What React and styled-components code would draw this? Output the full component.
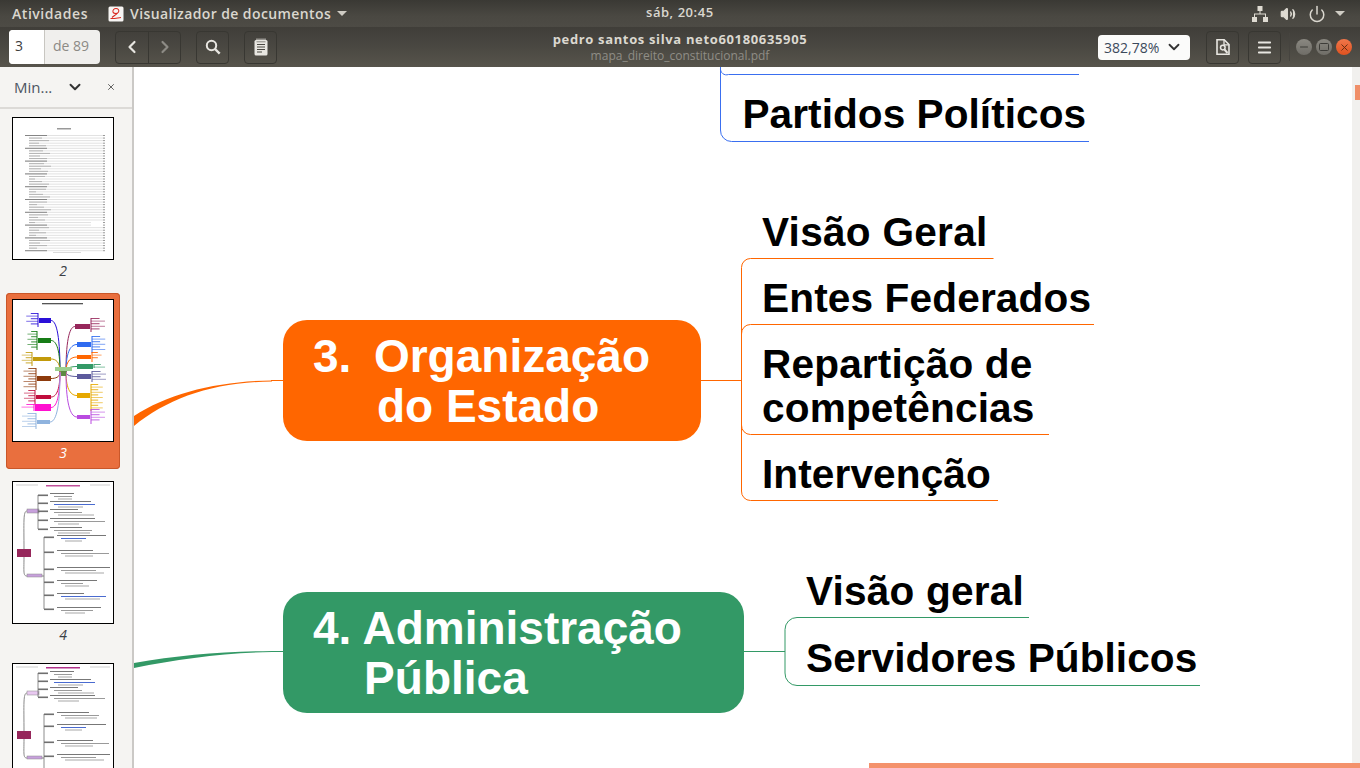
import React from 'react'
import styled, { createGlobalStyle } from 'styled-components'
import { ChevronLeft, ChevronRight, ChevronDown, Menu, X, Minus, Volume2, Power } from 'lucide-react'

const Global = createGlobalStyle`
  html, body { margin: 0; padding: 0; height: 100%; overflow: hidden; background: #fff; }
  * { box-sizing: border-box; }
`

const Screen = styled.div`
  width: 1360px;
  height: 768px;
  display: flex;
  flex-direction: column;
  overflow: hidden;
  font-family: "Open Sans", "Noto Sans", sans-serif;
  position: relative;
`

const TopBar = styled.div`
  height: 27px;
  flex: none;
  display: flex;
  align-items: center;
  padding: 0 12px;
  color: #dad7cf;
  font-size: 14px;
  font-weight: 600;
  letter-spacing: 0.55px;
  background: linear-gradient(#3a3934, #4a4842 60%, #4d4b45);
`

const AppName = styled.div`
  display: flex;
  align-items: center;
  gap: 6px;
  margin-left: 20px;
  letter-spacing: 0.4px;
`

const Clock = styled.div`
  position: absolute;
  left: 646px;
  top: 3px;
  font-weight: 600;
  font-size: 13px;
  letter-spacing: 0.55px;
`

const Tray = styled.div`
  margin-left: auto;
  display: flex;
  align-items: center;
  gap: 12px;
  padding-right: 3px;
`

const Caret = styled.span`
  width: 0;
  height: 0;
  margin-left: ${p => p.$ml || 0}px;
  border-left: 5px solid transparent;
  border-right: 5px solid transparent;
  border-top: 5px solid #cfccc4;
`

const ToolBar = styled.div`
  height: 40px;
  flex: none;
  display: flex;
  align-items: center;
  padding: 0 8px 0 9px;
  background: linear-gradient(#403e39, #4a4842 50%, #57544c);
`

const PageBox = styled.div`
  width: 91px;
  height: 34px;
  display: flex;
  border-radius: 4px;
  background: #f0efed;
  font-size: 14px;
  overflow: hidden;
`

const PageInput = styled.div`
  width: 36px;
  background: #fff;
  color: #3d3d3d;
  padding: 6px 0 0 6px;
  border-right: 1px solid #c8c6c1;
`

const PageTotal = styled.div`
  flex: 1;
  color: #8c8a85;
  padding: 6px 0 0 8px;
`

const ToolButton = styled.div`
  width: 33px;
  height: 33px;
  display: flex;
  align-items: center;
  justify-content: center;
  border: 1px solid #383732;
  border-radius: 4px;
  margin-left: ${p => p.$gap || 0}px;
  color: ${p => (p.$off ? '#8d8b85' : '#e8e6e1')};
`

const NavGroup = styled.div`
  display: flex;
  margin-left: 15px;
  border: 1px solid #383732;
  border-radius: 4px;
  & > div { border: 0; border-radius: 0; width: 32px; height: 31px; }
  & > div + div { border-left: 1px solid #383732; }
`

const DocTitle = styled.div`
  position: absolute;
  left: 440px;
  width: 480px;
  top: 31px;
  text-align: center;
  line-height: 17px;
  color: #dbd8d0;
  font-size: 13px;
  font-weight: 700;
  letter-spacing: 0.65px;
`

const DocFile = styled.div`
  color: #8f8d86;
  font-size: 12px;
  font-weight: 400;
  line-height: 13px;
  letter-spacing: 0;
  margin-top: 1px;
`

const ZoomBox = styled.div`
  margin-left: auto;
  width: 92px;
  height: 25px;
  display: flex;
  align-items: center;
  justify-content: space-between;
  padding: 0 7px 0 6px;
  border-radius: 4px;
  background: #fbfbfa;
  color: #3c4a5c;
  font-size: 14px;
`

const Divider = styled.div`
  width: 1px;
  height: 28px;
  background: #46443f;
  margin: 0 6px 0 8px;
`

const WinButton = styled.div`
  width: 16px;
  height: 16px;
  border-radius: 50%;
  display: flex;
  align-items: center;
  justify-content: center;
  margin-left: ${p => (p.$first ? 0 : 4)}px;
  color: ${p => (p.$close ? '#5e2a10' : '#3d3c38')};
  background: ${p => (p.$close ? 'linear-gradient(#f0764a, #e0521f)' : 'linear-gradient(#8a8881, #6f6d67)')};
`

const Body = styled.div`
  flex: 1;
  display: flex;
  min-height: 0;
`

const Sidebar = styled.aside`
  width: 134px;
  flex: none;
  display: flex;
  flex-direction: column;
  background: #f5f4f2;
  border-right: 2px solid #cbc9c6;
  overflow: hidden;
`

const SideHead = styled.div`
  height: 42px;
  flex: none;
  display: flex;
  align-items: center;
  padding: 0 16px 0 14px;
  color: #4d5563;
  font-size: 15px;
  border-bottom: 2px solid #dcdad7;
  span { flex: 1; }
`

const Thumbs = styled.div`
  display: flex;
  flex-direction: column;
  padding: 2px 0 0 6px;
`

const Thumb = styled.div`
  width: 114px;
  height: 176px;
  flex: none;
  padding: 6px 0 0 6px;
  border-radius: 4px;
  margin-bottom: 6px;
  background: ${p => (p.$active ? '#e96f3e' : 'transparent')};
  box-shadow: ${p => (p.$active ? 'inset 0 0 0 1px #c9572a' : 'none')};
`

const Sheet = styled.svg`
  display: block;
  width: 102px;
  height: 143px;
  background: #fff;
  border: 1px solid #000;
`

const PageNo = styled.div`
  width: 102px;
  margin-top: 1px;
  text-align: center;
  font-size: 14px;
  font-style: italic;
  line-height: 19px;
  color: ${p => (p.$active ? '#fff' : '#3b3f46')};
`

const Canvas = styled.main`
  flex: 1;
  position: relative;
  background: #fff;
  overflow: hidden;
  font-family: "Liberation Sans", Arial, sans-serif;
`

const Wires = styled.svg`
  position: absolute;
  left: 0;
  top: 0;
`

const Topic = styled.div`
  position: absolute;
  left: 149px;
  top: ${p => p.$top}px;
  width: ${p => p.$w}px;
  height: 121px;
  padding: 11px 0 0 30px;
  border-radius: 24px;
  background: ${p => p.$bg};
  color: #fff;
  font-size: 46px;
  font-weight: 700;
  line-height: 50px;
  white-space: pre;
`

const TopicLine = styled.div`
  word-spacing: ${p => p.$ws || 0}px;
`

const Leaf = styled.div`
  position: absolute;
  left: ${p => p.$x}px;
  top: ${p => p.$y}px;
  color: #000;
  font-size: 40.6px;
  font-weight: 700;
  line-height: 44px;
  white-space: pre;
  letter-spacing: ${p => p.$ls || 0}px;
`

const ScrollTrack = styled.div`
  width: 8px;
  flex: none;
  position: relative;
  background: #f1f0ee;
`

const ScrollThumb = styled.div`
  position: absolute;
  right: 0;
  top: 18px;
  width: 5px;
  height: 15px;
  background: #f08f69;
`

const Selection = styled.div`
  position: absolute;
  left: 869px;
  right: 0;
  bottom: 0;
  height: 5px;
  background: #f4926c;
`

// ---- little drawings ----

const EvinceIcon = () => (
  <svg width="16" height="16" viewBox="0 0 16 16">
    <rect x="0.5" y="0.5" width="15" height="15" rx="1.5" fill="#f7f5f3" />
    <path d="M2.500 12.500c3 .4 7-.6 10.500-1M4 11.500c1.500-1.500 5-3 6.500-5.500 1-2-.5-3.500-2.500-3.500S4.500 4 5 6c.5 1.500 3 1.800 5 1" fill="none" stroke="#d8281f" strokeWidth="1.1" />
  </svg>
)

const NetworkIcon = () => (
  <svg width="16" height="16" viewBox="0 0 16 16" fill="#dfdbd2">
    <rect x="5.500" y="0" width="5" height="5" />
    <rect x="0" y="11" width="5" height="5" />
    <rect x="11" y="11" width="5" height="5" />
    <path d="M7.500 5h1v2.500h5.500V11h-1V8.500H3V11H2V7.500h5.500z" />
  </svg>
)

const NotesIcon = () => (
  <svg width="14" height="18" viewBox="0 0 14 18">
    <rect x="0.500" y="2" width="13" height="15.500" rx="1.500" fill="#e8e6e1" />
    <path d="M3 0.500v3M5 0.500v3M7 0.500v3M9 0.500v3M11 0.500v3" stroke="#e8e6e1" strokeWidth="1" />
    <path d="M2.500 3.800h9" stroke="#4a4842" strokeWidth="0.600" />
    <path d="M3 6.500h8M3 9h8M3 11.500h8M3 14h5" stroke="#4a4842" strokeWidth="1.100" />
  </svg>
)

const SearchIcon = () => (
  <svg width="16" height="16" viewBox="0 0 16 16" fill="none" stroke="#e8e6e1">
    <circle cx="6.500" cy="6.500" r="4.700" strokeWidth="2" />
    <path d="M10 10l4.700 4.700" strokeWidth="2.400" />
  </svg>
)

const DocSearchIcon = () => (
  <svg width="14" height="16" viewBox="0 0 14 16" fill="none">
    <path d="M1 .8h7.200L13 5.500v9.700H1z" stroke="#e8e6e1" strokeWidth="1.600" fill="#55524b" />
    <path d="M8 1v4.800h5" stroke="#e8e6e1" strokeWidth="1.300" />
    <circle cx="6.800" cy="8.600" r="2.300" stroke="#e8e6e1" strokeWidth="1.500" />
    <path d="M8.500 10.500l3 3.500" stroke="#e8e6e1" strokeWidth="2" />
  </svg>
)

// thumbnails are tiny drawings of the pdf pages, not readable text
const TocPage = () => (
  <Sheet viewBox="0 0 100 141">
    <rect x="44" y="10" width="14" height="1.500" fill="#999" />
    {Array.from({ length: 46 }, (_, i) => {
      const y = 17 + i * 2.560
      const head = i % 5 === 0
      const x = head ? 12 : 16
      const end = i === 34 || i === 35 ? 78 : 90
      return (
        <g key={i}>
          <rect x={x} y={y} width={end - x} height="1" fill="#e2e2e2" />
          <rect x={x} y={y} width={head ? 22 : 6 + ((i * 7) % 17)} height="1" fill={head ? '#858585' : '#b4b4b4'} />
          <rect x="90" y={y} width="2" height="1" fill="#999" />
        </g>
      )
    })}
    <rect x="40" y="134" width="28" height="1" fill="#dadada" />
  </Sheet>
)

// colour, node x, y, w, h, leaf x, leaf width, leaf top, leaf bottom
const mapBranches = [
  ['#2a10d8', 26, 18, 12, 5, 8, 16, 13, 27],
  ['#177c17', 25, 38, 13, 5, 11, 13, 31, 50],
  ['#c29a0a', 20, 57, 18, 4, 5, 14, 52, 66],
  ['#8d3a0c', 24, 76, 14, 5, 6, 17, 68, 90],
  ['#c00d3d', 23, 95, 15, 4, 7, 15, 90, 105],
  ['#ff10d0', 22, 104, 16, 7, 4, 17, 104, 111],
  ['#8fb3de', 24, 120, 13, 4, 4, 19, 113, 129],
  ['#96275b', 62, 24, 15, 5, 78, 19, 18, 32],
  ['#2f6bf0', 64, 42, 14, 5, 79, 18, 36, 53],
  ['#ff6600', 64, 55, 14, 4, 79, 13, 52, 62],
  ['#339966', 64, 64, 16, 5, 80, 15, 64, 68],
  ['#5c5a9c', 64, 74, 14, 5, 78, 19, 71, 82],
  ['#e6a800', 64, 93, 13, 5, 78, 16, 84, 111],
  ['#b94be0', 64, 115, 13, 4, 78, 19, 109, 124],
]

const MapPage = () => (
  <Sheet viewBox="0 0 100 141">
    <rect x="29" y="3" width="41" height="1.300" fill="#555" />
    {mapBranches.map(([c, x, y, w, h, lx, lw, top, bottom]) => {
      const left = x < 45
      const ex = left ? x + w : x
      const ey = y + h / 2
      const sx = left ? 47 : 53
      const spine = left ? x : x + w
      return (
        <g key={c}>
          <path d={`M${sx} 72C${sx} ${ey + (72 - ey) * 0.2} ${(sx + ex) / 2} ${ey} ${ex} ${ey}`} fill="none" stroke={c} strokeWidth="1" />
          <rect x={x} y={y} width={w} height={h} fill={c} />
          <rect x={left ? spine - 1.500 : spine + 0.500} y={top} width="1" height={bottom - top} fill={c} />
          {Array.from({ length: Math.max(2, Math.floor((bottom - top) / 2.600)) }, (_, i) => {
            const width = lw * (0.450 + ((i * 3) % 6) / 10.500)
            return (
              <rect
                key={i}
                x={left ? spine - 1 - width : spine + 1}
                y={top + i * 2.600}
                width={width}
                height="1"
                fill={c}
                opacity={i % 2 ? 0.6 : 0.85}
              />
            )
          })}
        </g>
      )
    })}
    <rect x="42" y="67" width="17" height="4" fill="#9ccf8f" />
    <rect x="48" y="71" width="5" height="5" fill="#5d8b43" />
  </Sheet>
)

const OutlinePage = ({ title, upper, lower, upperFill }) => {
  const rows = [...upper.map(y => [y, 35, true]), ...lower.map(y => [y, 42, false])]
  return (
    <Sheet viewBox="0 0 100 141">
      <rect x="3" y="2.500" width="22" height="1" fill="#d0d0d0" />
      <rect x="77" y="2.500" width="20" height="1" fill="#d0d0d0" />
      <rect x="33" y="3" width="34" height="1.500" fill={title} />
      <path d="M11 68C11 40 10 29 14 29M11 75C11 90 10 94 14 94" fill="none" stroke="#8a8a8a" strokeWidth="1" />
      <rect x="4" y="67" width="14" height="8" fill="#96275b" />
      <rect x="14" y="27" width="12" height="4" fill={upperFill} stroke="#8a8a8a" strokeWidth="0.500" />
      <rect x="14" y="92" width="15" height="3" fill="#c7a0dc" stroke="#8a8a8a" strokeWidth="0.500" />
      <path
        d={`M26 29H25V${upper[0]}M25 29V${upper[upper.length - 1]}M29 94H31V${lower[0]}M31 94V${lower[lower.length - 1]}`}
        fill="none"
        stroke="#6f6f6f"
        strokeWidth="0.800"
      />
      {rows.map(([y, x, top], i) => (
        <g key={i}>
          <rect x={top ? 25 : 31} y={y - 0.500} width="10" height="1.600" fill="#6f6f6f" />
          <rect x={x + 2} y={y - 2} width={24 + ((i * 17) % 30)} height="1" fill="#777" />
          <rect x={x + 6} y={y + 1} width={18 + ((i * 23) % 36)} height="1" fill={i % 4 === 1 ? '#4a6bd0' : '#9a9a9a'} />
          <rect x={x + 10} y={y + 3.500} width={14 + ((i * 11) % 26)} height="1" fill="#a8a8a8" />
        </g>
      ))}
    </Sheet>
  )
}

export default function App() {
  return (
    <Screen>
      <Global />
      <TopBar>
        Atividades
        <AppName>
          <EvinceIcon />
          Visualizador de documentos
          <Caret />
        </AppName>
        <Clock>sáb, 20:45</Clock>
        <Tray>
          <NetworkIcon />
          <Volume2 size={16} fill="#dfdbd2" />
          <Power size={18} strokeWidth={2} />
          <Caret $ml={-3} />
        </Tray>
      </TopBar>

      <ToolBar>
        <PageBox>
          <PageInput>3</PageInput>
          <PageTotal>de 89</PageTotal>
        </PageBox>
        <NavGroup>
          <ToolButton><ChevronLeft size={20} strokeWidth={2.6} /></ToolButton>
          <ToolButton $off><ChevronRight size={20} strokeWidth={2.6} /></ToolButton>
        </NavGroup>
        <ToolButton $gap={15}><SearchIcon /></ToolButton>
        <ToolButton $gap={15}><NotesIcon /></ToolButton>
        <DocTitle>
          pedro santos silva neto60180635905
          <DocFile>mapa_direito_constitucional.pdf</DocFile>
        </DocTitle>
        <ZoomBox>
          382,78%
          <ChevronDown size={18} strokeWidth={2.4} color="#333" />
        </ZoomBox>
        <ToolButton $gap={16}><DocSearchIcon /></ToolButton>
        <ToolButton $gap={9}><Menu size={17} strokeWidth={2.6} /></ToolButton>
        <Divider />
        <WinButton $first><Minus size={12} /></WinButton>
        <WinButton>
          <svg width="10" height="8"><rect x="0.500" y="0.500" width="9" height="7" rx="1" fill="none" stroke="#3d3c38" /></svg>
        </WinButton>
        <WinButton $close><X size={11} strokeWidth={2} /></WinButton>
      </ToolBar>

      <Body>
        <Sidebar>
          <SideHead>
            <span>Min...</span>
            <ChevronDown size={18} strokeWidth={2.6} color="#333" style={{ marginRight: 22 }} />
            <X size={10} strokeWidth={2} color="#444" />
          </SideHead>
          <Thumbs>
            <Thumb><TocPage /><PageNo>2</PageNo></Thumb>
            <Thumb $active><MapPage /><PageNo $active>3</PageNo></Thumb>
            <Thumb>
              <OutlinePage title="#c0509a" upperFill="#c7a0dc" upper={[13, 21, 29, 38, 47]} lower={[55, 70, 87, 100, 113, 127]} />
              <PageNo>4</PageNo>
            </Thumb>
            <Thumb>
              <OutlinePage title="#b0308a" upperFill="#e8c8f0" upper={[9, 17, 25, 33]} lower={[50, 62, 78, 92, 106]} />
            </Thumb>
          </Thumbs>
        </Sidebar>

        <Canvas>
          <Wires width="1218" height="701" viewBox="0 0 1218 701" fill="none">
            {/* canvas starts at x=134, y=67 */}
            <g stroke="#3a6ff0" strokeWidth="1">
              <path d="M586.500 0V1a6 6 0 0 0 8 6.500H945" />
              <path d="M586.500 0V63a11 11 0 0 0 11 11.500H955" />
            </g>
            <g stroke="#ff6600" strokeWidth="1">
              <path d="M859.500 191.500H616.500a9 9 0 0 0 -9 9V424a9 9 0 0 0 9 9.500H864" />
              <path d="M607.500 267a9 9 0 0 1 9 -9.500H960" />
              <path d="M607.500 358a9 9 0 0 0 9 9.500H915" />
              <path d="M567 313.500H607.500" />
              <path d="M137 313.500H150" />
            </g>
            <path d="M0 359C34 331 80 315 138 314.500V313.500C85 314 35 326 0 349z" fill="#ff6600" />
            <g stroke="#339966" strokeWidth="1">
              <path d="M895 550.500H663a12 12 0 0 0 -12 12V606a12 12 0 0 0 12 12.500H1066" />
              <path d="M610 584.500H651" />
              <path d="M137 584.500H150" />
            </g>
            <path d="M0 596C45 588 90 584.500 138 584V585C90 586 45 592 0 601z" fill="#339966" />
          </Wires>

          <Topic $top={253} $w={418} $bg="#ff6600">
            <TopicLine $ws={-1.500}>{'3.  Organização'}</TopicLine>
            <TopicLine>{'     do Estado'}</TopicLine>
          </Topic>
          <Topic $top={525} $w={461} $bg="#339966">
            <TopicLine>4. Administração</TopicLine>
            <TopicLine>{'    Pública'}</TopicLine>
          </Topic>

          <Leaf $x={608.500} $y={25} $ls={0.050}>Partidos Políticos</Leaf>
          <Leaf $x={628} $y={143} $ls={0.270}>Visão Geral</Leaf>
          <Leaf $x={628} $y={209} $ls={0.140}>Entes Federados</Leaf>
          <Leaf $x={628} $y={275} $ls={0.160}>{'Repartição de\ncompetências'}</Leaf>
          <Leaf $x={628} $y={385} $ls={0.100}>Intervenção</Leaf>
          <Leaf $x={672} $y={502} $ls={0.200}>Visão geral</Leaf>
          <Leaf $x={672} $y={569} $ls={0.060}>Servidores Públicos</Leaf>
        </Canvas>
        <ScrollTrack><ScrollThumb /></ScrollTrack>
      </Body>
      <Selection />
    </Screen>
  )
}
